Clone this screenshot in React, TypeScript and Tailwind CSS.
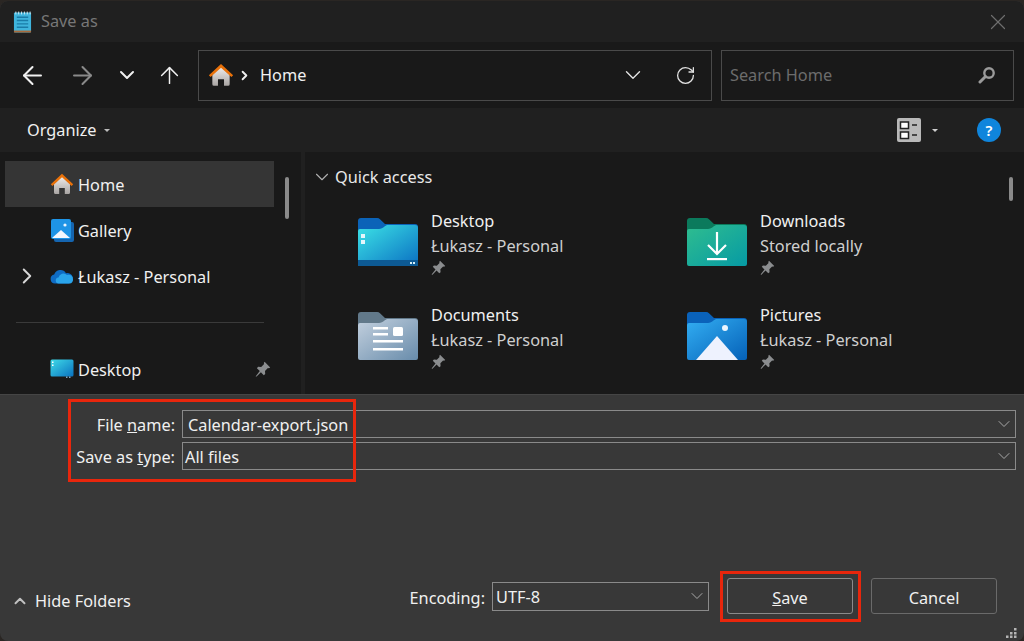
import { ArrowLeft, ArrowRight, ArrowUp, ChevronDown, ChevronRight, ChevronUp, RotateCw, X } from "lucide-react"

const font = "font-['Noto_Sans',sans-serif]"

function HomeIcon({ className }: { className: string }) {
  return (
    <svg viewBox="0 0 24 22" className={className}>
      <defs>
        <linearGradient id="homeBody" x1="0" y1="0" x2="0" y2="1">
          <stop offset="0" stopColor="#f2f0ef" />
          <stop offset="1" stopColor="#a8a4a2" />
        </linearGradient>
      </defs>
      <path d="M4 10 12 3 20 10v9.500a1.500 1.500 0 0 1-1.500 1.500h-3.700v-6H9.200v6H5.500A1.500 1.500 0 0 1 4 19.500z" fill="url(#homeBody)" />
      <path d="M0.800 11.200 12 0.800l11.200 10.400-1.600 1.700L12 4.200 2.400 12.900z" fill="#e8710a" />
    </svg>
  )
}

function GalleryIcon() {
  return (
    <svg viewBox="0 0 24 24" className="h-6 w-6">
      <rect x="4" y="4" width="20" height="20" rx="2" fill="#1565b0" />
      <rect x="1" y="1" width="20" height="20" rx="2" fill="#1e94e6" />
      <path d="M2 20 11 12l9 8z" fill="#f4f7fd" />
      <circle cx="15" cy="7" r="1.600" fill="#e8f4ff" />
    </svg>
  )
}

function CloudIcon() {
  return (
    <svg viewBox="0 0 24 16" className="h-4 w-6">
      <path d="M5 15.500a4.500 4.500 0 0 1-.8-8.900A6.500 6.500 0 0 1 16 5.200 5 5 0 0 1 19 15.500z" fill="#0f6cc4" />
      <path d="M9 15.500a3 3 0 0 1-.5-6A5 5 0 0 1 17 7a4.400 4.400 0 0 1 6 4.400 4 4 0 0 1-3.500 4.100z" fill="#2aa4ea" />
    </svg>
  )
}

function DesktopIcon() {
  return (
    <svg viewBox="0 0 24 20" className="h-5 w-6">
      <defs>
        <linearGradient id="deskSmall" x1="0" y1="0" x2="1" y2="1">
          <stop offset="0" stopColor="#3fdbe8" />
          <stop offset="1" stopColor="#0a72c0" />
        </linearGradient>
      </defs>
      <rect x="0.500" y="0.500" width="23" height="17" rx="1.500" fill="url(#deskSmall)" />
      <rect x="2" y="2.500" width="1.500" height="1.500" fill="#fff" />
      <rect x="2" y="5.500" width="1.500" height="1.500" fill="#fff" />
      <rect x="16" y="17.500" width="1.500" height="1.500" fill="#7fa9c6" />
      <rect x="19" y="17.500" width="1.500" height="1.500" fill="#7fa9c6" />
    </svg>
  )
}

function Pin({ className }: { className: string }) {
  return (
    <svg viewBox="0 0 16 16" className={className}>
      <path d="M9.600 0.800 15.200 6.400 13.900 7.300 12.900 7 10 9.900 10.200 13 8.800 14.200 5.900 11.200 1.600 15.600 0.600 15.400 4.800 10.100 1.900 7.200 3.100 5.800 6.200 6 9.100 3.100 8.800 2.100z" fill="#8b8d8f" />
    </svg>
  )
}

function Folder({
  id,
  tab,
  from,
  to,
  children,
}: {
  id: string
  tab: string
  from: string
  to: string
  children?: React.ReactNode
}) {
  return (
    <svg viewBox="0 0 62 50" className="h-[50px] w-[62px] shrink-0">
      <defs>
        <linearGradient id={id} x1="0" y1="0" x2="1" y2="1">
          <stop offset="0" stopColor={from} />
          <stop offset="1" stopColor={to} />
        </linearGradient>
      </defs>
      <path d="M1 4a3 3 0 0 1 3-3h16a4 4 0 0 1 3 1.200L28 7h30a3 3 0 0 1 3 3v10H1z" fill={tab} />
      <path d="M1 14a2 2 0 0 1 2-2h19c2 0 4-1 5.500-2.500L30 8h28a3 3 0 0 1 3 3v36a2 2 0 0 1-2 2H3a2 2 0 0 1-2-2z" fill={`url(#${id})`} />
      {children}
    </svg>
  )
}

const tiles = [
  {
    name: "Desktop",
    sub: "Łukasz - Personal",
    icon: (
      <Folder id="fDesktop" tab="#0b63b8" from="#3ce3e6" to="#0a6fc2">
        <rect x="1" y="43" width="60" height="6" fill="#0d5a94" />
        <rect x="4" y="17" width="4" height="4" fill="#e4f6fb" />
        <rect x="4" y="23" width="4" height="4" fill="#e4f6fb" />
        <rect x="53" y="45" width="2" height="2" fill="#d5eef6" />
        <rect x="56" y="45" width="2" height="2" fill="#d5eef6" />
      </Folder>
    ),
  },
  {
    name: "Downloads",
    sub: "Stored locally",
    icon: (
      <Folder id="fDownloads" tab="#0b7a5c" from="#2fbd8f" to="#069aa4">
        <path d="M31 15v21M22 28l9 9 9-9" stroke="#fff" strokeWidth="2.200" fill="none" />
        <rect x="21" y="41" width="20" height="2.200" fill="#fff" />
      </Folder>
    ),
  },
  {
    name: "Documents",
    sub: "Łukasz - Personal",
    icon: (
      <Folder id="fDocuments" tab="#62798a" from="#c3d0de" to="#688cab">
        <rect x="16" y="16" width="15" height="2.500" fill="#fff" />
        <rect x="16" y="22" width="15" height="2.500" fill="#fff" />
        <rect x="16" y="29" width="30" height="2.500" fill="#fff" />
        <rect x="16" y="37" width="30" height="2.500" fill="#fff" />
        <rect x="36" y="16" width="10" height="9" rx="1.500" fill="#fff" />
      </Folder>
    ),
  },
  {
    name: "Pictures",
    sub: "Łukasz - Personal",
    icon: (
      <Folder id="fPictures" tab="#0a62ba" from="#33aef2" to="#0561b8">
        <path d="M10 49 31 25l21 24z" fill="#eef2fe" />
        <circle cx="39" cy="17" r="3" fill="#eaf6ff" />
      </Folder>
    ),
  },
]

function NavRow({
  icon,
  label,
  active,
  chevron,
  pin,
}: {
  icon: React.ReactNode
  label: string
  active?: boolean
  chevron?: boolean
  pin?: boolean
}) {
  return (
    <div className={`flex h-[46px] w-[269px] items-center ${active ? "bg-[#353535]" : ""}`}>
      <div className="flex w-[45px] justify-end pr-[10px]">
        {chevron && <ChevronRight className="h-[26px] w-[26px] text-[#d8d8d8]" strokeWidth={1.8} />}
      </div>
      <div className="flex w-[28px] justify-start">{icon}</div>
      <span className="flex-1 pt-[2px] text-[16.3px] text-[#f0f0f0]">{label}</span>
      {pin && <Pin className="mr-[3px] h-4 w-4" />}
    </div>
  )
}

function Tile({ name, sub, icon }: { name: string; sub: string; icon: React.ReactNode }) {
  return (
    <div className="flex h-[94px] items-center">
      <div className="flex w-[74px]">{icon}</div>
      <div className="flex flex-col">
        <span className="h-[25px] text-[16.3px] leading-[25px] text-[#f0f0f0]">{name}</span>
        <span className="h-[25px] text-[16.3px] leading-[25px] text-[#cfcfcf]">{sub}</span>
        <Pin className="mt-px h-[15px] w-[15px]" />
      </div>
    </div>
  )
}

function Caret({ className }: { className: string }) {
  return <span className={`h-0 w-0 border-x-[3px] border-t-[3px] border-x-transparent ${className}`} />
}

export default function App() {
  return (
    <div className={`relative h-[641px] w-[1024px] overflow-hidden bg-[#2a2623] pt-px ${font}`}>
      <div className="flex h-[640px] flex-col overflow-hidden rounded-[8px] bg-[#383838]">
        {/* title bar */}
        <div className="flex h-[41px] items-center bg-[#202020] pl-[13px] pr-[13px]">
          <svg viewBox="0 0 20 24" className="h-[24px] w-[19px]">
            <rect x="1" y="2" width="18" height="21" rx="1" fill="#3fb4dc" />
            <rect x="1" y="21" width="18" height="2" fill="#a86a3c" />
            <path d="M4 7h12M4 10.500h12M4 14h12M4 17.500h12" stroke="#1a7ca8" strokeWidth="1.500" />
            <path d="M3 1v3M6 1v3M9 1v3M12 1v3M15 1v3M18 1v3" stroke="#d8eef6" strokeWidth="1" />
          </svg>
          <span className="ml-[9px] flex-1 text-[16.3px] text-[#777777]">Save as</span>
          <X className="h-[26px] w-[26px] text-[#6e6e6e]" strokeWidth={1.1} />
        </div>

        {/* address bar */}
        <div className="flex h-[66px] items-center bg-[#191919] pr-[10px]">
          <div className="flex w-[198px] items-center text-[#f0f0f0]">
            <ArrowLeft className="ml-[18px] h-[29px] w-[29px] shrink-0" strokeWidth={1.7} />
            <ArrowRight className="ml-[21px] h-[29px] w-[29px] shrink-0 text-[#8a8a8a]" strokeWidth={1.7} />
            <ChevronDown className="ml-[18px] h-[24px] w-[24px] shrink-0" strokeWidth={2} />
            <ArrowUp className="ml-[17px] h-[27px] w-[27px] shrink-0" strokeWidth={1.3} />
          </div>
          <div className="flex h-[51px] w-[514px] items-center border border-[#4a4a4a] bg-[#191919] pl-[9px] pr-[15px]">
            <HomeIcon className="h-[24px] w-[26px]" />
            <ChevronRight className="ml-[3px] h-[15px] w-[15px] text-[#f0f0f0]" strokeWidth={3} />
            <span className="ml-[8px] flex-1 text-[16.3px] text-[#f0f0f0]">Home</span>
            <ChevronDown className="h-[26px] w-[26px] text-[#e0e0e0]" strokeWidth={1.3} />
            <RotateCw className="ml-[29px] h-[21px] w-[21px] text-[#e0e0e0]" strokeWidth={1.5} />
          </div>
          <div className="ml-[9px] flex h-[51px] flex-1 items-center border border-[#4a4a4a] px-[8px]">
            <span className="flex-1 text-[16.3px] text-[#6c6c6c]">Search Home</span>
            <svg viewBox="0 0 18 18" className="mr-[9px] h-[18px] w-[18px]">
              <circle cx="11" cy="7" r="4.700" fill="none" stroke="#9a9a9a" strokeWidth="2.400" />
              <path d="M7.500 10.500 2 16" stroke="#9a9a9a" strokeWidth="3" strokeLinecap="round" />
            </svg>
          </div>
        </div>

        {/* command bar */}
        <div className="flex h-[44px] items-center bg-[#202020] pl-[27px] pr-[23px]">
          <span className="text-[16.3px] text-[#f0f0f0]">Organize</span>
          <Caret className="ml-[7px] border-t-[#bdbdbd]" />
          <div className="flex-1" />
          <svg viewBox="0 0 24 24" className="h-[24px] w-[24px]">
            <rect width="24" height="24" rx="2" fill="#b9b9b9" />
            <rect x="3.500" y="4" width="8" height="6.500" fill="#fff" stroke="#222" strokeWidth="1.500" />
            <rect x="3.500" y="14" width="8" height="6.500" fill="#fff" stroke="#222" strokeWidth="1.500" />
            <path d="M15 7h5M15 17h5" stroke="#222" strokeWidth="1.500" />
          </svg>
          <Caret className="ml-[11px] border-t-[#d0d0d0]" />
          <span className="ml-[39px] flex h-[24px] w-[24px] items-center justify-center rounded-full bg-[#0f85dc] text-[15px] font-semibold leading-none text-white">
            ?
          </span>
        </div>

        {/* browser */}
        <div className="flex h-[242px] overflow-hidden bg-[#191919]">
          <div className="flex h-full w-[301px] pl-[5px] pt-[9px]">
            <div className="w-[269px]">
              <NavRow active label="Home" icon={<HomeIcon className="h-[22px] w-[24px]" />} />
              <NavRow label="Gallery" icon={<GalleryIcon />} />
              <NavRow chevron label="Łukasz - Personal" icon={<CloudIcon />} />
              <div className="ml-[11px] mt-[23px] h-px w-[248px] bg-[#3a3a3a]" />
              <div className="mt-[23px]">
                <NavRow pin label="Desktop" icon={<DesktopIcon />} />
              </div>
            </div>
            <div className="ml-[11px] mt-[16px] h-[42px] w-[4px] rounded-full bg-[#8a8a8a]" />
          </div>
          <div className="w-[4px] bg-[#202020]" />
          <div className="flex flex-1 pl-[6px] pt-[13px]">
            <div className="flex-1">
              <div className="flex h-[24px] items-center">
                <ChevronDown className="h-[22px] w-[22px] text-[#b0b0b0]" strokeWidth={1.2} />
                <span className="ml-[2px] text-[16.3px] text-[#e8e8e8]">Quick access</span>
              </div>
              <div className="mt-[6px] grid grid-cols-[329px_1fr] pl-[46px]">
                {tiles.map((tile) => (
                  <Tile key={tile.name} {...tile} />
                ))}
              </div>
            </div>
            <div className="mr-[11px] mt-[12px] h-[24px] w-[4px] rounded-full bg-[#8a8a8a]" />
          </div>
        </div>

        {/* footer */}
        <div className="flex flex-1 flex-col border-t border-[#454545] text-[16.3px] text-[#f0f0f0]">
          <div className="mt-[15px] flex items-center pr-[8px]">
            <span className="w-[175px] pt-[2px] text-right">
              File <span className="underline">n</span>ame:
            </span>
            <div className="ml-[7px] flex h-[28px] flex-1 items-center border border-[#8a8a8a] pl-[5px] pr-px">
              <span className="flex-1 pt-[2px]">Calendar-export.json</span>
              <ChevronDown className="h-[20px] w-[20px] text-[#a8a8a8]" strokeWidth={1.2} />
            </div>
          </div>
          <div className="mt-[4px] flex items-center pr-[8px]">
            <span className="w-[175px] pt-[2px] text-right">
              Save as <span className="underline">t</span>ype:
            </span>
            <div className="ml-[7px] flex h-[28px] flex-1 items-center border border-[#8a8a8a] pl-[2px] pr-px">
              <span className="flex-1 pt-[2px]">All files</span>
              <ChevronDown className="h-[20px] w-[20px] text-[#a8a8a8]" strokeWidth={1.2} />
            </div>
          </div>
          <div className="flex-1" />
          <div className="mb-[27px] flex items-center pl-[11px] pr-[27px]">
            <div className="flex flex-1 items-center pt-[10px]">
              <ChevronUp className="h-[18px] w-[18px] text-[#c0c0c0]" strokeWidth={2.6} />
              <span className="ml-[6px]">Hide Folders</span>
            </div>
            <span className="pt-[4px]">Encoding:</span>
            <div className="ml-[7px] flex h-[29px] w-[217px] items-center border border-[#8a8a8a] pl-[3px] pr-px">
              <span className="flex-1 pt-[3px]">UTF-8</span>
              <ChevronDown className="h-[20px] w-[20px] text-[#a8a8a8]" strokeWidth={1.2} />
            </div>
            <div className="ml-[18px] flex h-[36px] w-[126px] items-center justify-center rounded-[3px] border border-[#8a8a8a] pt-[4px]">
              <span>
                <span className="underline">S</span>ave
              </span>
            </div>
            <div className="ml-[18px] flex h-[36px] w-[126px] items-center justify-center rounded-[3px] border border-[#6a6a6a] pt-[4px]">
              Cancel
            </div>
          </div>
        </div>
      </div>

      {/* resize grip */}
      <svg viewBox="0 0 12 10" className="absolute bottom-[3px] right-[7px] h-[10px] w-[12px]">
        <path d="M9 0h2.500v2.500H9zM5 4h2.500v2.500H5zM9 4h2.500v2.500H9zM1 7.500h2.500V10H1zM5 7.500h2.500V10H5zM9 7.500h2.500V10H9z" fill="#b5b5b5" />
      </svg>

      {/* red callouts from the screenshot annotation */}
      <div className="absolute left-[68px] top-[399px] h-[83px] w-[288px] border-[3px] border-[#e8260c]" />
      <div className="absolute left-[720px] top-[571px] h-[51px] w-[141px] border-[3px] border-[#e8260c]" />
    </div>
  )
}
